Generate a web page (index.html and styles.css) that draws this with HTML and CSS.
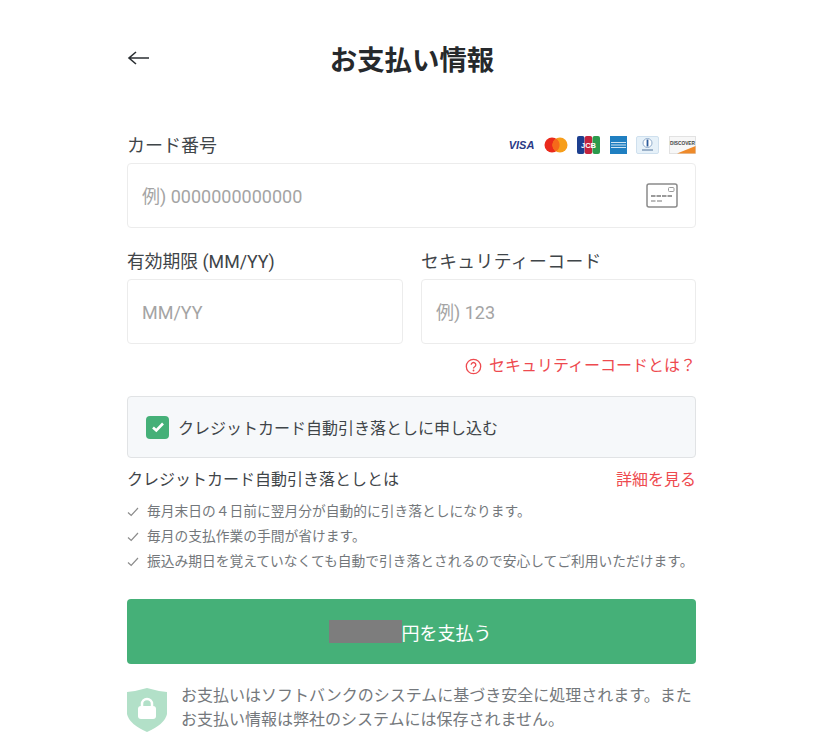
FILE: index.html
```html
<!DOCTYPE html>
<html lang="ja">
<head>
<meta charset="utf-8">
<title>お支払い情報</title>
<link rel="stylesheet" href="styles.css">
</head>
<body>
<main class="page">
  <header class="header">
    <svg class="back" width="24" height="16" viewBox="0 0 24 16"><path d="M22 8H2M9 2L2 8l7 6" fill="none" stroke="#2b2f33" stroke-width="1.6"/></svg>
    <h1 class="title">お支払い情報</h1>
  </header>

  <div class="label-row">
    <label class="label">カード番号</label>
    <div class="brands">
      <svg width="25" height="14" viewBox="0 0 25 14"><text x="12.500" y="11" text-anchor="middle" class="visa">VISA</text></svg>
      <svg width="24" height="16" viewBox="0 0 24 16"><circle cx="8" cy="8" r="7.500" fill="#ea2a1c"/><circle cx="16" cy="8" r="7.500" fill="#f79e1b"/><path d="M12 1.600a7.500 7.500 0 0 1 0 12.800a7.500 7.500 0 0 1 0-12.800z" fill="#f6691a"/></svg>
      <svg width="23" height="18" viewBox="0 0 23 18"><rect width="7.500" height="18" rx="2" fill="#1c3f8f"/><rect x="7.700" width="7.500" height="18" rx="2" fill="#c3233c"/><rect x="15.500" width="7.500" height="18" rx="2" fill="#2b9a4c"/><text x="11.500" y="12" text-anchor="middle" class="jcb">JCB</text></svg>
      <svg width="17" height="18" viewBox="0 0 17 18"><rect width="17" height="18" fill="#1f7fc1"/><path d="M1 6.500h15M1 9h15M1 11.500h15" stroke="#cfe5f4" stroke-width="1.200"/></svg>
      <svg width="23" height="18" viewBox="0 0 23 18"><rect x=".5" y=".5" width="22" height="17" rx="1.500" fill="#e6f1f9" stroke="#cfe0ee"/><circle cx="11.500" cy="7" r="4.500" fill="#fff" stroke="#8fabcb"/><path d="M11.500 3.500v7" stroke="#2c5c9c" stroke-width="1.800"/><path d="M6 14h11" stroke="#8aa3be" stroke-width="1.600"/></svg>
      <svg width="27" height="18" viewBox="0 0 27 18"><rect x=".5" y=".5" width="26" height="17" fill="#f7f7f7" stroke="#e2e2e2"/><path d="M8 17.500L26.500 10v7.500z" fill="#ee8a2a"/><text x="13.500" y="8.500" text-anchor="middle" class="discover">DISCOVER</text></svg>
    </div>
  </div>
  <div class="field field-card">
    <span class="placeholder">例) 0000000000000</span>
    <svg class="card-icon" width="32" height="25" viewBox="0 0 32 25"><rect x="1" y="1" width="30" height="23" rx="2" fill="none" stroke="#8a8a8a" stroke-width="1.500"/><rect x="22.500" y="4.500" width="5.500" height="4" rx="1" fill="none" stroke="#9a9a9a"/><path d="M5 13h21" stroke="#9a9a9a" stroke-width="2" stroke-dasharray="4.500 1"/><path d="M5 18h4.500M11 18h5" stroke="#a5a5a5" stroke-width="1.500"/></svg>
  </div>

  <div class="two-col">
    <div class="col">
      <label class="label label-col">有効期限 (MM/YY)</label>
      <div class="field"><span class="placeholder">MM/YY</span></div>
    </div>
    <div class="col">
      <label class="label label-col label-wide">セキュリティーコード</label>
      <div class="field"><span class="placeholder">例) 123</span></div>
    </div>
  </div>

  <div class="help-row">
    <a class="help">
      <svg width="17" height="17" viewBox="0 0 17 17"><circle cx="8.500" cy="8.500" r="7.200" fill="none" stroke="#ee4a4f" stroke-width="1.300"/><path d="M6.200 6.800a2.300 2.300 0 1 1 3.500 2c-.8.5-1.200.9-1.200 1.700" fill="none" stroke="#ee4a4f" stroke-width="1.300"/><circle cx="8.500" cy="12.500" r=".9" fill="#ee4a4f"/></svg>
      <span>セキュリティーコードとは？</span>
    </a>
  </div>

  <div class="auto-box">
    <span class="checkbox"><svg width="14" height="12" viewBox="0 0 14 12"><path d="M2 6.500l3.300 3L12 2.500" fill="none" stroke="#fff" stroke-width="2.600"/></svg></span>
    <span class="auto-text">クレジットカード自動引き落としに申し込む</span>
  </div>

  <div class="about-row">
    <span class="about-title">クレジットカード自動引き落としとは</span>
    <a class="detail">詳細を見る</a>
  </div>

  <ul class="checks">
    <li class="check"><svg class="tick" width="12" height="10" viewBox="0 0 12 10"><path d="M1 5.500l3.200 3L11 1" fill="none" stroke="#8c8c8c" stroke-width="1.200"/></svg>毎月末日の４日前に翌月分が自動的に引き落としになります。</li>
    <li class="check"><svg class="tick" width="12" height="10" viewBox="0 0 12 10"><path d="M1 5.500l3.200 3L11 1" fill="none" stroke="#8c8c8c" stroke-width="1.200"/></svg>毎月の支払作業の手間が省けます。</li>
    <li class="check"><svg class="tick" width="12" height="10" viewBox="0 0 12 10"><path d="M1 5.500l3.200 3L11 1" fill="none" stroke="#8c8c8c" stroke-width="1.200"/></svg>振込み期日を覚えていなくても自動で引き落とされるので安心してご利用いただけます。</li>
  </ul>

  <button class="pay"><span class="redact"></span>円を支払う</button>

  <div class="secure">
    <svg class="shield" width="40" height="44" viewBox="0 0 40 44"><path d="M0 4Q10 3 20 0Q30 3 40 4V26Q38 36 20 44Q2 36 0 26Z" fill="#b2e0c8"/><rect x="11" y="18" width="18" height="13" rx="3" fill="#fff"/><path d="M15 19v-3a5 5 0 0 1 10 0v3" fill="none" stroke="#fff" stroke-width="2.500"/></svg>
    <p class="secure-text">お支払いはソフトバンクのシステムに基づき安全に処理されます。また<br>お支払い情報は弊社のシステムには保存されません。</p>
  </div>
</main>
</body>
</html>
```

FILE: styles.css
```css
* { box-sizing: border-box; }
html, body { margin: 0; padding: 0; background: #fff; overflow: hidden; }
body {
  height: 739px;
  font-family: Roboto, "Noto Sans CJK JP", sans-serif;
  color: #3a4045;
}
.page { width: 569px; margin-left: 127px; }
.header { position: relative; height: 40px; margin-top: 41px; display: flex; align-items: center; justify-content: center; }
.back { position: absolute; left: 0; top: 9px; }
.title { margin: 0 0 0 1px; font-size: 27.400px; font-weight: 700; line-height: 40px; color: #26292c; }
.label-row { display: flex; justify-content: space-between; align-items: center; margin-top: 51px; height: 28px; margin-bottom: 3px; }
.label { font-size: 18px; line-height: 28px; color: #3f4549; display: block; }
.label-wide { letter-spacing: .4px; }
.brands { display: flex; align-items: center; gap: 9.600px; margin-bottom: 2px; }
.brands svg { display: block; }
.visa { font: italic 700 11px "Liberation Sans", sans-serif; fill: #2a3a86; }
.jcb { font: 700 7.500px "Liberation Sans", sans-serif; fill: #fff; }
.discover { font: 700 4.800px "Liberation Sans", sans-serif; fill: #444; }
.field { height: 65px; border: 1px solid #ececec; border-radius: 4px; padding: 0 14px; display: flex; align-items: center; justify-content: space-between; background: #fff; }
.placeholder { font-size: 18px; line-height: 24px; color: #a4a4a4; padding-top: 3px; }
.card-icon { margin-right: 3px; }
.two-col { display: grid; grid-template-columns: 276px 275px; gap: 18px; margin-top: 20px; }
.label-col { margin-bottom: 3px; font-size: 17.800px; }
.help-row { display: flex; justify-content: flex-end; margin-top: 10px; }
.help { display: flex; align-items: center; gap: 7px; font-size: 16px; line-height: 24px; color: #ee4a4f; }
.auto-box { height: 62px; margin-top: 18px; display: flex; align-items: center; gap: 9px; padding-left: 18px; background: #f6f8fa; border: 1px solid #e1e3e5; border-radius: 4px; }
.checkbox { width: 23px; height: 23px; border-radius: 4px; background: #45b078; display: flex; align-items: center; justify-content: center; }
.auto-text { font-size: 16px; color: #3f4549; }
.about-row { display: flex; justify-content: space-between; margin-top: 10px; font-size: 16px; line-height: 24px; }
.about-title { color: #3f4549; }
.detail { color: #ee4a4f; }
.checks { list-style: none; margin: 7px 0 0; padding: 0; }
.check { display: flex; align-items: center; gap: 8px; font-size: 13.750px; line-height: 25px; color: #73777b; white-space: nowrap; }
.tick { flex: none; }
.pay { display: flex; align-items: center; justify-content: center; width: 100%; height: 65px; margin-top: 25px; padding: 0 3px 0 0; border: 0; border-radius: 4px; background: #45b078; color: #fff; font: inherit; font-size: 18px; }
.redact { width: 73px; height: 23px; background: #7d7d7d; }
.secure { display: flex; gap: 14px; margin-top: 24px; }
.shield { flex: none; }
.secure-text { margin: 0; font-size: 16px; line-height: 24px; color: #74787c; white-space: nowrap; margin-top: -4px; }
```
